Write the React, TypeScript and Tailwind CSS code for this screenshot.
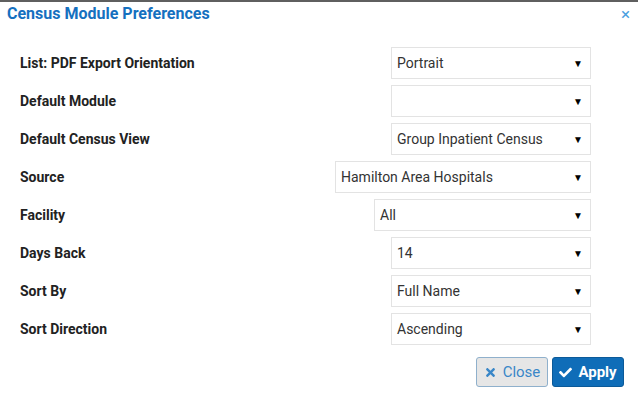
import { FaCheck, FaTimes } from 'react-icons/fa'

type Row = {
  label: string
  value: string
  width: string
}

const rows: Row[] = [
  { label: 'List: PDF Export Orientation', value: 'Portrait', width: 'w-[200px]' },
  { label: 'Default Module', value: '', width: 'w-[200px]' },
  { label: 'Default Census View', value: 'Group Inpatient Census', width: 'w-[200px]' },
  { label: 'Source', value: 'Hamilton Area Hospitals', width: 'w-[256px]' },
  { label: 'Facility', value: 'All', width: 'w-[217px]' },
  { label: 'Days Back', value: '14', width: 'w-[200px]' },
  { label: 'Sort By', value: 'Full Name', width: 'w-[200px]' },
  { label: 'Sort Direction', value: 'Ascending', width: 'w-[200px]' },
]

function FakeSelect({ value, width }: { value: string; width: string }) {
  return (
    <div
      className={`${width} h-[32px] flex items-center justify-between pl-[5px] pr-[7px] border border-[#e3e3e3] bg-white text-[14px] text-[#333]`}
    >
      <span>{value}</span>
      <span className="text-[10px] text-black">▼</span>
    </div>
  )
}

export default function App() {
  return (
    <div
      className="w-[638px] h-[395px] bg-white border-t-2 border-[#5f5f5f] flex flex-col"
      style={{ fontFamily: 'Roboto, "Liberation Sans", sans-serif' }}
    >
      <div className="pl-[7px] pr-[8px] pt-[3px] flex items-center justify-between">
        <h2 className="text-[16px] leading-[18px] font-bold text-[#1570bf]">Census Module Preferences</h2>
        <span className="text-[17px] leading-[18px] text-[#4a9ee0]">×</span>
      </div>

      <div className="mt-[24px] pl-[20px] pr-[47px] flex flex-col gap-[6px]">
        {rows.map((row) => (
          <div key={row.label} className="flex items-center justify-between">
            <div className="text-[14px] font-bold text-[#222]">{row.label}</div>
            <FakeSelect value={row.value} width={row.width} />
          </div>
        ))}
      </div>

      <div className="mt-[12px] pr-[14px] flex justify-end gap-[4px]">
        <button className="h-[30px] w-[72px] flex items-center justify-center gap-[6px] rounded-[3px] border border-[#8fb0cc] bg-[#e6e6e6] text-[15px] text-[#3a87c8]">
          <FaTimes className="text-[13px]" />
          Close
        </button>
        <button className="h-[30px] w-[72px] flex items-center justify-center gap-[6px] rounded-[3px] border border-[#0b5a99] bg-[#0f6db8] text-[15px] font-bold text-white">
          <FaCheck className="text-[13px]" />
          Apply
        </button>
      </div>
    </div>
  )
}
